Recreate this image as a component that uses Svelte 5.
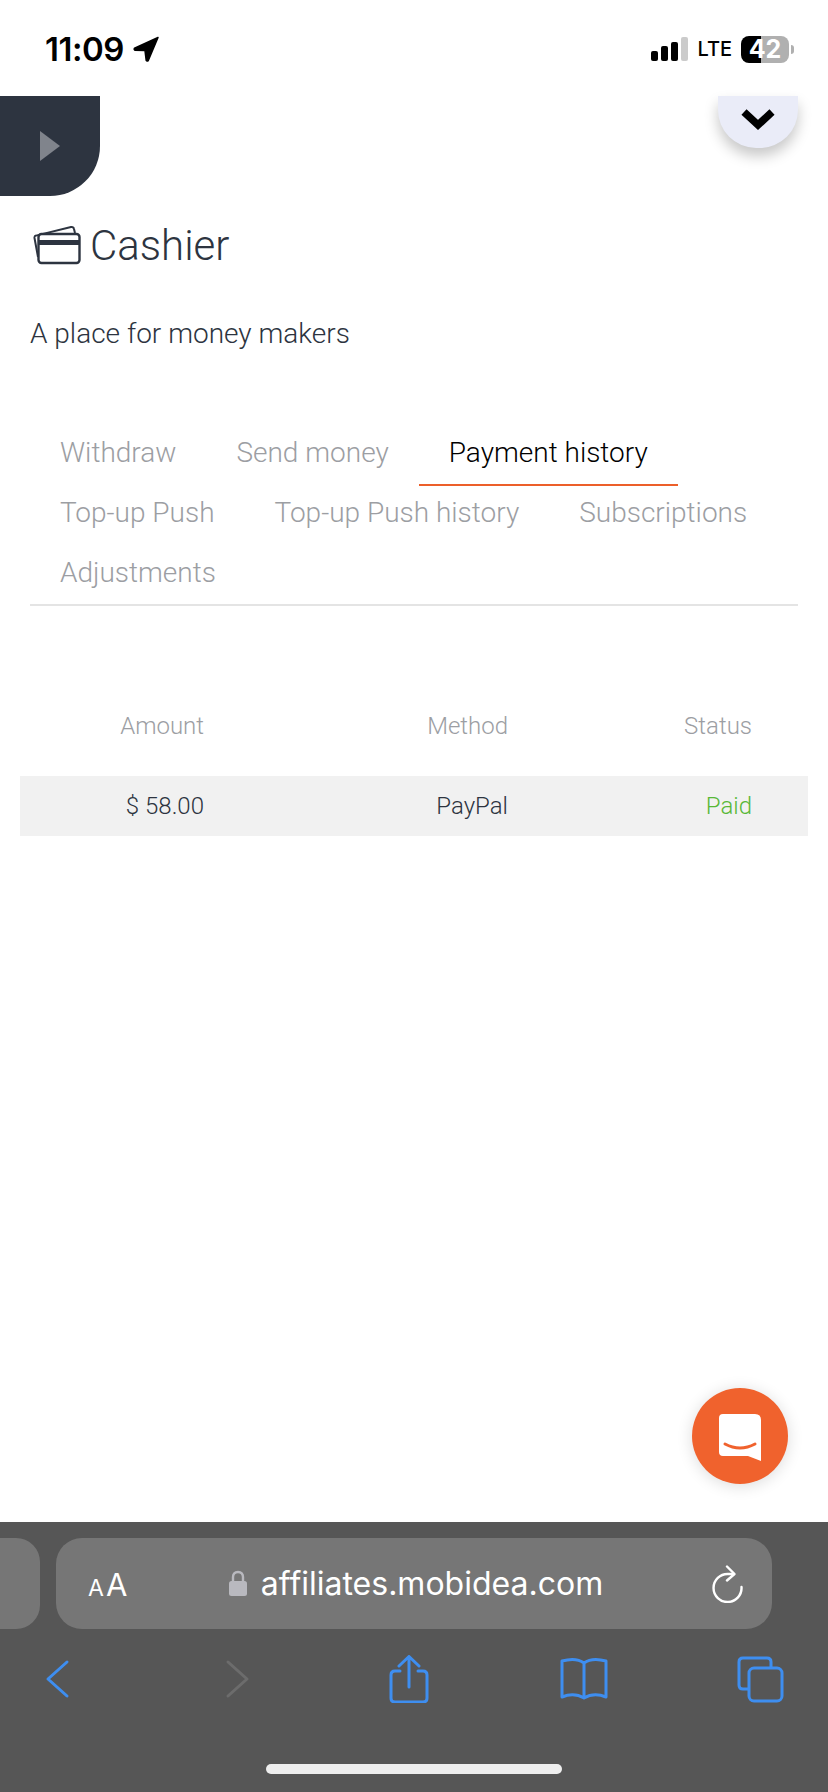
<script>
    const tabs = [
        { label: "Withdraw" },
        { label: "Send money" },
        { label: "Payment history", active: true },
        { label: "Top-up Push" },
        { label: "Top-up Push history" },
        { label: "Subscriptions" },
        { label: "Adjustments" },
    ];

    const payments = [{ amount: "$ 58.00", method: "PayPal", status: "Paid" }];
</script>

<div class="phone">
    <header class="statusbar">
        <div class="clock">
            <span>11:09</span>
            <svg width="26" height="26" viewBox="0 0 26 26">
                <path d="M25 1.5 L1.5 12.2 Q0.6 13.6 2 14.2 L12 14.6 L13.2 24.4 Q14 25.6 15.2 24.6 Z" fill="#000" stroke="#000" stroke-width="1.5" stroke-linejoin="round" />
            </svg>
        </div>
        <div class="indicators">
            <div class="signal">
                <i class="b1"></i><i class="b2"></i><i class="b3"></i><i class="b4"></i>
            </div>
            <span class="lte">LTE</span>
            <div class="battery"><span>42</span></div>
            <div class="nub"></div>
        </div>
    </header>

    <main class="page">
        <div class="toprow">
            <button class="side-toggle" aria-label="Open menu"><span class="triangle"></span></button>
            <button class="collapse" aria-label="Collapse">
                <svg width="36" height="24" viewBox="0 0 36 24">
                    <path d="M4 5 L18 18 L32 5" fill="none" stroke="#000" stroke-width="7.5" />
                </svg>
            </button>
        </div>

        <h1>
            <svg width="50" height="40" viewBox="0 0 50 40" fill="none" stroke="#2d3440" stroke-width="2">
                <path d="M6 32 L2.5 13 Q2.2 11 4 10.6 L39 2 Q41.5 1.6 42 4 L43 8" />
                <rect x="6.5" y="9" width="41" height="29" rx="3" fill="#fff" stroke-width="2.4" />
                <rect x="6.5" y="15" width="41" height="5" fill="#2d3440" stroke="none" />
            </svg>
            Cashier
        </h1>
        <p class="lead">A place for money makers</p>

        <nav class="tabs">
            {#each tabs as tab}
                <a href="#top" class="tab" class:active={tab.active}>{tab.label}</a>
            {/each}
        </nav>

        <table>
            <thead>
                <tr>
                    <th class="c1">Amount</th>
                    <th class="c2">Method</th>
                    <th class="c3">Status</th>
                </tr>
            </thead>
            <tbody>
                {#each payments as p}
                    <tr>
                        <td>{p.amount}</td>
                        <td>{p.method}</td>
                        <td class="paid">{p.status}</td>
                    </tr>
                {/each}
            </tbody>
        </table>

        <button class="chat" aria-label="Chat">
            <svg width="44" height="50" viewBox="0 0 44 50">
                <path d="M5 1 H37 Q43 1 43 7 V48 L30 43 H5 Q1 43 1 39 V5 Q1 1 5 1 Z" fill="#fff" />
                <path d="M7 31 Q22 39 37 31" fill="none" stroke="#f0622d" stroke-width="3" stroke-linecap="round" />
            </svg>
        </button>
    </main>

    <footer class="safari">
        <div class="urlrow">
            <div class="prev-tab"></div>
            <div class="urlbar">
                <span class="aa"><small>A</small>A</span>
                <div class="address">
                    <svg width="18" height="27" viewBox="0 0 18 27">
                        <path d="M4 12 V7 Q4 2 9 2 Q14 2 14 7 V12" fill="none" stroke="#b9b9bf" stroke-width="2.4" />
                        <rect x="0" y="11" width="18" height="15" rx="2.5" fill="#b9b9bf" />
                    </svg>
                    <span>affiliates.mobidea.com</span>
                </div>
                <svg class="reload" width="32" height="38" viewBox="0 0 32 38" fill="none" stroke="#fff" stroke-width="2.4" stroke-linecap="round" stroke-linejoin="round">
                    <path d="M29.5 22 A14 14 0 1 1 16 9 H21" />
                    <path d="M15 1.5 L22.5 9 L15 15.5" />
                </svg>
            </div>
        </div>
        <div class="toolbar">
            <svg width="48" height="48" viewBox="0 0 48 48" fill="none" stroke="#3e8ef0" stroke-width="3" stroke-linecap="round" stroke-linejoin="round">
                <path d="M34 7 L15 24 L34 41" />
            </svg>
            <svg width="48" height="48" viewBox="0 0 48 48" fill="none" stroke="#6c6c6c" stroke-width="3" stroke-linecap="round" stroke-linejoin="round">
                <path d="M19 7 L38 24 L19 41" />
            </svg>
            <svg width="48" height="48" viewBox="0 0 48 48" fill="none" stroke="#3e8ef0" stroke-width="3" stroke-linecap="round" stroke-linejoin="round">
                <path d="M15 16 H10 Q6 16 6 20 V43 Q6 47 10 47 H38 Q42 47 42 43 V20 Q42 16 38 16 H33" />
                <path d="M24 32 V2 M14 11 L24 1.5 L34 11" />
            </svg>
            <svg width="48" height="48" viewBox="0 0 48 48" fill="none" stroke="#3e8ef0" stroke-width="3" stroke-linecap="round" stroke-linejoin="round">
                <path d="M24 8 Q16 2 2 6 V42 Q14 37 24 43 Q34 37 46 42 V6 Q32 2 24 8 V43" />
            </svg>
            <svg width="48" height="48" viewBox="0 0 48 48" fill="none" stroke="#3e8ef0" stroke-width="3" stroke-linejoin="round">
                <path d="M13 34 H7 Q3 34 3 30 V7 Q3 3 7 3 H31 Q35 3 35 7 V13" />
                <rect x="13" y="13" width="33" height="33" rx="5" />
            </svg>
        </div>
        <div class="home"></div>
    </footer>
</div>

<style>
    :global(body) {
        margin: 0;
        background: #fff;
    }

    .phone {
        height: 1792px;
        display: flex;
        flex-direction: column;
        overflow: hidden;
        font-family: Roboto, "Liberation Sans", sans-serif;
    }

    button {
        border: none;
        padding: 0;
        cursor: pointer;
    }

    .statusbar {
        height: 96px;
        flex: none;
        box-sizing: border-box;
        padding: 2px 34px 0 45px;
        display: flex;
        justify-content: space-between;
        align-items: center;
        font-family: Inter, sans-serif;
        color: #000;
    }

    .clock {
        display: flex;
        align-items: center;
        gap: 9px;
        font-size: 33px;
        font-weight: 600;
        letter-spacing: -0.5px;
    }

    .indicators {
        display: flex;
        align-items: center;
    }

    .signal {
        display: flex;
        align-items: flex-end;
        gap: 3px;
        height: 24px;
        margin-right: 9px;
    }

    .signal i {
        width: 7px;
        border-radius: 2px;
        background: #000;
    }

    .b1 { height: 10px; }
    .b2 { height: 15px; }
    .b3 { height: 19px; }
    .signal .b4 {
        height: 24px;
        background: #cbcbcb;
    }

    .lte {
        font-size: 20px;
        font-weight: 500;
        margin-right: 9px;
    }

    .battery {
        width: 48px;
        height: 27px;
        border-radius: 8px;
        background: linear-gradient(to right, #000 42%, #b0b0b0 42%);
        color: #fff;
        font-size: 25px;
        font-weight: 700;
        display: flex;
        align-items: center;
        justify-content: center;
    }

    .nub {
        width: 3px;
        height: 9px;
        margin-left: 2px;
        background: #b0b0b0;
        border-radius: 0 3px 3px 0;
    }

    .page {
        flex: 1;
        position: relative;
        color: #2d3440;
    }

    .toprow {
        display: flex;
        justify-content: space-between;
        align-items: flex-start;
        padding-right: 30px;
    }

    .side-toggle {
        width: 100px;
        height: 100px;
        background: #2d3440;
        border-bottom-right-radius: 50px;
        display: flex;
        align-items: center;
        padding-left: 40px;
    }

    .triangle {
        border-left: 20px solid #80848c;
        border-top: 15px solid transparent;
        border-bottom: 15px solid transparent;
    }

    .collapse {
        width: 80px;
        height: 52px;
        background: #eaecf8;
        border-radius: 0 0 38px 38px;
        box-shadow: 0 8px 14px rgba(0, 0, 0, 0.22);
        display: flex;
        justify-content: center;
        padding-top: 11px;
    }

    h1 {
        margin: 22px 0 0 32px;
        display: flex;
        align-items: center;
        gap: 8px;
        height: 54px;
        font-size: 42px;
        font-weight: 300;
    }

    .lead {
        margin: 44px 0 0 30px;
        font-size: 28px;
        font-weight: 300;
        line-height: 36px;
    }

    .tabs {
        margin: 71px 30px 0;
        padding-bottom: 1px;
        border-bottom: 2px solid #e4e4e4;
        display: flex;
        flex-wrap: wrap;
    }

    .tab {
        position: relative;
        height: 60px;
        box-sizing: border-box;
        padding: 0 30px;
        line-height: 60px;
        font-size: 28px;
        font-weight: 300;
        color: #9c9ea3;
        text-decoration: none;
    }

    .tab.active {
        color: #000;
    }

    .tab.active::after {
        content: "";
        position: absolute;
        left: 0;
        right: 0;
        bottom: -3px;
        height: 2px;
        background: #ec5f2a;
    }

    table {
        margin: 88px 0 0 20px;
        width: 788px;
        border-collapse: collapse;
        table-layout: fixed;
        font-size: 24px;
        font-weight: 300;
    }

    th, td {
        text-align: right;
        padding: 0 56px 0 0;
        height: 60px;
        font-weight: 300;
    }

    th {
        color: #9c9ea3;
        height: 82px;
        padding-bottom: 18px;
        box-sizing: border-box;
    }

    .c1 { width: 240px; }
    .c2 { width: 304px; }

    tbody tr {
        background: #f1f1f1;
    }

    .paid {
        color: #58b837;
    }

    .chat {
        position: absolute;
        right: 40px;
        bottom: 38px;
        width: 96px;
        height: 96px;
        border-radius: 50%;
        background: #f0622d;
        box-shadow: 0 2px 16px rgba(0, 0, 0, 0.14);
        display: flex;
        align-items: center;
        justify-content: center;
    }

    .chat svg {
        margin-top: 4px;
    }

    .safari {
        flex: none;
        height: 270px;
        background: #565656;
        box-sizing: border-box;
        padding-top: 16px;
        display: flex;
        flex-direction: column;
        font-family: Inter, sans-serif;
    }

    .urlrow {
        display: flex;
        gap: 16px;
        margin-left: -20px;
    }

    .prev-tab {
        width: 60px;
        height: 91px;
        border-radius: 0 24px 24px 0;
        background: #767676;
    }

    .urlbar {
        width: 716px;
        height: 91px;
        box-sizing: border-box;
        border-radius: 26px;
        background: #767676;
        color: #fff;
        display: flex;
        align-items: center;
        padding: 0 28px 0 32px;
    }

    .aa {
        font-size: 31px;
        width: 32px;
        margin-top: 2px;
        white-space: nowrap;
    }

    .aa small {
        font-size: 23px;
        margin-right: 2px;
    }

    .address {
        flex: 1;
        display: flex;
        align-items: center;
        justify-content: center;
        gap: 14px;
        font-size: 32px;
        white-space: nowrap;
    }

    .toolbar {
        display: flex;
        justify-content: space-between;
        padding: 26px 44px 0 33px;
    }

    .home {
        width: 296px;
        height: 10px;
        border-radius: 5px;
        background: #eee;
        margin: 61px auto 0;
    }
</style>
